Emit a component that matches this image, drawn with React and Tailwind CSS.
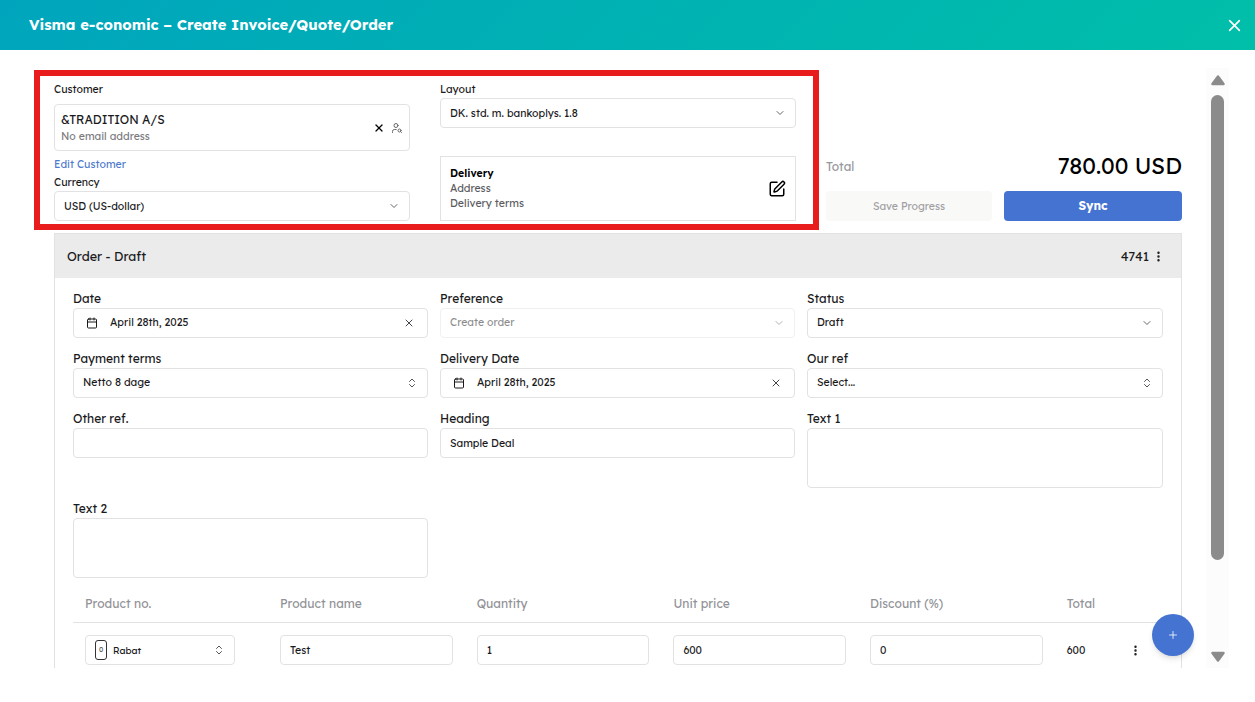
import { useState } from 'react';
import { Calendar, ChevronDown, ChevronsUpDown, EllipsisVertical, Plus, SquarePen, UserSearch, X } from 'lucide-react';

const columns = ['Product no.', 'Product name', 'Quantity', 'Unit price', 'Discount (%)', 'Total'];

function Box({ children, className = '' }) {
    return (
        <div className={`flex h-[30px] w-full items-center justify-between rounded border border-[#e2e2e4] bg-white px-[9px] text-[10.5px] ${className}`}>
            {children}
        </div>
    );
}

function Field({ label, children }) {
    return (
        <div>
            <div className="h-5 text-[12px] leading-[21px] text-[#1a1a1c]">{label}</div>
            {children}
        </div>
    );
}

function Select({ value, disabled, className = 'mt-px' }) {
    return (
        <Box className={disabled ? 'opacity-50' : ''}>
            <span className={className}>{value}</span>
            <ChevronDown size={12} className="text-[#66666b]" />
        </Box>
    );
}

function Combobox({ value }) {
    return (
        <Box>
            <span className="-mt-px">{value}</span>
            <ChevronsUpDown size={12} className="text-[#55555a]" />
        </Box>
    );
}

function DateInput({ value, onClear }) {
    return (
        <Box className="pl-[12px]">
            <Calendar size={12} />
            <span className="-mt-px ml-3 flex-1">{value}</span>
            <button onClick={onClear} aria-label="Clear date">
                <X size={12} className="mr-[3px] text-[#44444a]" />
            </button>
        </Box>
    );
}

function TextArea() {
    return <div className="h-[60px] rounded border border-[#e2e2e4]" />;
}

function Summary() {
    return (
        <div className="grid h-[165px] grid-cols-3 gap-[30px] text-[#1a1a1c]">
            <div className="pt-[13px]">
                <div className="h-[23px] text-[10.5px] leading-[17px]">Customer</div>
                <div className="flex h-[47px] items-center justify-between rounded border border-[#e2e2e4] pl-1.5 pr-1.5">
                    <div>
                        <div className="text-[12px] leading-[17px]">&amp;TRADITION A/S</div>
                        <div className="text-[10.5px] leading-[17px] text-[#7b7b80]">No email address</div>
                    </div>
                    <div className="flex items-center gap-[6px]">
                        <X size={12} strokeWidth={2.5} className="text-black" />
                        <UserSearch size={12} className="text-[#66666b]" />
                    </div>
                </div>
                <div className="mt-1 text-[10.5px] leading-[18px] text-[#4f7bcd]">Edit Customer</div>
                <div className="h-[18px] text-[10.5px] leading-[18px]">Currency</div>
                <Select value="USD (US-dollar)" />
            </div>

            <div className="pt-[13px]">
                <div className="h-[17px] text-[10.5px] leading-[17px]">Layout</div>
                <Select value="DK. std. m. bankoplys. 1.8" />
                <div className="mt-7 flex h-[65px] items-center justify-between border border-[#e2e2e4] px-[9px] text-[10.5px] leading-[15px]">
                    <div className="text-[#5c5c61]">
                        <div className="font-semibold text-black">Delivery</div>
                        <div>Address</div>
                        <div>Delivery terms</div>
                    </div>
                    <SquarePen size={18} className="text-black" />
                </div>
            </div>

            <div className="flex flex-col justify-end pb-3">
                <div className="mb-2.5 flex h-[30px] items-center justify-between">
                    <span className="mt-px text-[12px] text-[#98989d]">Total</span>
                    <span className="text-[22.5px] text-black">780.00 USD</span>
                </div>
                <div className="flex gap-3 text-[10.5px]">
                    <button className="h-[30px] w-[166px] rounded bg-[#f9f9f8] pt-px text-[#a0a0a3]">Save Progress</button>
                    <button className="h-[30px] flex-1 rounded bg-[#4573d2] text-[12px] font-bold text-white">Sync</button>
                </div>
            </div>
        </div>
    );
}

function ProductTable() {
    return (
        <div className="mt-1.5 text-[10.5px]">
            <div className="grid h-[39px] grid-cols-[195px_repeat(4,196.7px)_1fr] items-center border-b border-[#e2e2e4] pt-0.5 text-[12px] text-[#929297]">
                {columns.map((name) => (
                    <div key={name} className="pl-3">{name}</div>
                ))}
            </div>
            <div className="grid grid-cols-[195px_repeat(4,196.7px)_1fr] items-center pt-3">
                <div className="pl-3 pr-[33px]">
                    <Box>
                        <span className="flex h-5 w-3 items-center justify-center rounded-[3px] border border-[#333338] text-[7px] text-[#55555a]">0</span>
                        <span className="ml-1.5 flex-1 text-[9.5px]">Rabat</span>
                        <ChevronsUpDown size={12} className="text-[#55555a]" />
                    </Box>
                </div>
                {['Test', '1', '600', '0'].map((value) => (
                    <div key={value} className="px-3">
                        <Box><span className="mt-px">{value}</span></Box>
                    </div>
                ))}
                <div className="flex items-center justify-between pl-3 pr-[21px]">
                    <span className="mt-px">600</span>
                    <EllipsisVertical size={13} strokeWidth={2.5} />
                </div>
            </div>
        </div>
    );
}

function Scrollbar() {
    return (
        <div className="flex h-[600px] w-[23px] flex-col items-center bg-[#fcfcfc]">
            <svg width="16" height="12" viewBox="0 0 16 12" className="mt-1.5 shrink-0">
                <path d="M8 2.5 L13.5 10 H2.5 Z" fill="#8b8b8b" stroke="#8b8b8b" strokeWidth="2.5" strokeLinejoin="round" />
            </svg>
            <div className="mt-[9px] h-[465px] w-[13px] shrink-0 rounded-full bg-[#8b8b8b]" />
            <svg width="16" height="12" viewBox="0 0 16 12" className="mt-[91px] shrink-0">
                <path d="M8 9.5 L13.5 2 H2.5 Z" fill="#8b8b8b" stroke="#8b8b8b" strokeWidth="2.5" strokeLinejoin="round" />
            </svg>
        </div>
    );
}

export default function App() {
    const [date, setDate] = useState('April 28th, 2025');
    const [deliveryDate, setDeliveryDate] = useState('April 28th, 2025');

    return (
        <div className="relative h-[702px] w-[1255px] overflow-hidden bg-white font-[Lexend,Inter,sans-serif] text-[#1a1a1c] [font-feature-settings:'cv11']">
            <header className="flex h-[50px] items-center justify-between bg-linear-[135deg,#00a5bd,#00bfa9] pl-[29px] pr-[13px] text-white">
                <h1 className="text-[14.75px] font-bold">Visma e-conomic – Create Invoice/Quote/Order</h1>
                <button aria-label="Close">
                    <X size={15} className="scale-[1.3]" />
                </button>
            </header>

            <main className="mt-[18px] flex h-[600px] justify-between overflow-hidden pl-[54px] pr-[26px]">
                <div className="w-[1128px]">
                    <Summary />

                    <section className="border border-[#e2e2e4] pb-20">
                        <div className="flex h-11 items-center justify-between bg-[#ebebeb] pl-3 pr-4 text-[12.6px]">
                            <span>Order - Draft</span>
                            <span className="flex items-center gap-[3px]">
                                4741
                                <EllipsisVertical size={13} strokeWidth={2.5} className="mt-0.5" />
                            </span>
                        </div>
                        <div className="px-[18px] pt-2.5">
                            <div className="grid grid-cols-[355px_355px_356px] gap-x-3 gap-y-2.5">
                                <Field label="Date"><DateInput value={date} onClear={() => setDate('')} /></Field>
                                <Field label="Preference"><Select value="Create order" className="-mt-px" disabled /></Field>
                                <Field label="Status"><Select value="Draft" className="-mt-px" /></Field>
                                <Field label="Payment terms"><Combobox value="Netto 8 dage" /></Field>
                                <Field label="Delivery Date"><DateInput value={deliveryDate} onClear={() => setDeliveryDate('')} /></Field>
                                <Field label="Our ref"><Combobox value="Select..." /></Field>
                                <Field label="Other ref."><Box /></Field>
                                <Field label="Heading"><Box><span className="mt-px">Sample Deal</span></Box></Field>
                                <Field label="Text 1"><TextArea /></Field>
                                <Field label="Text 2"><TextArea /></Field>
                            </div>
                            <ProductTable />
                        </div>
                    </section>
                </div>
                <Scrollbar />
            </main>

            {/* highlight around the customer and layout settings */}
            <div className="pointer-events-none absolute left-[34px] top-[70px] h-[160px] w-[785px] border-6 border-[#e81c1c]" />

            <button aria-label="Add line" className="absolute left-[1152px] top-[614px] flex size-[42px] items-center justify-center rounded-full bg-[#4573d2] text-white/80 shadow-md">
                <Plus size={12} />
            </button>
        </div>
    );
}
